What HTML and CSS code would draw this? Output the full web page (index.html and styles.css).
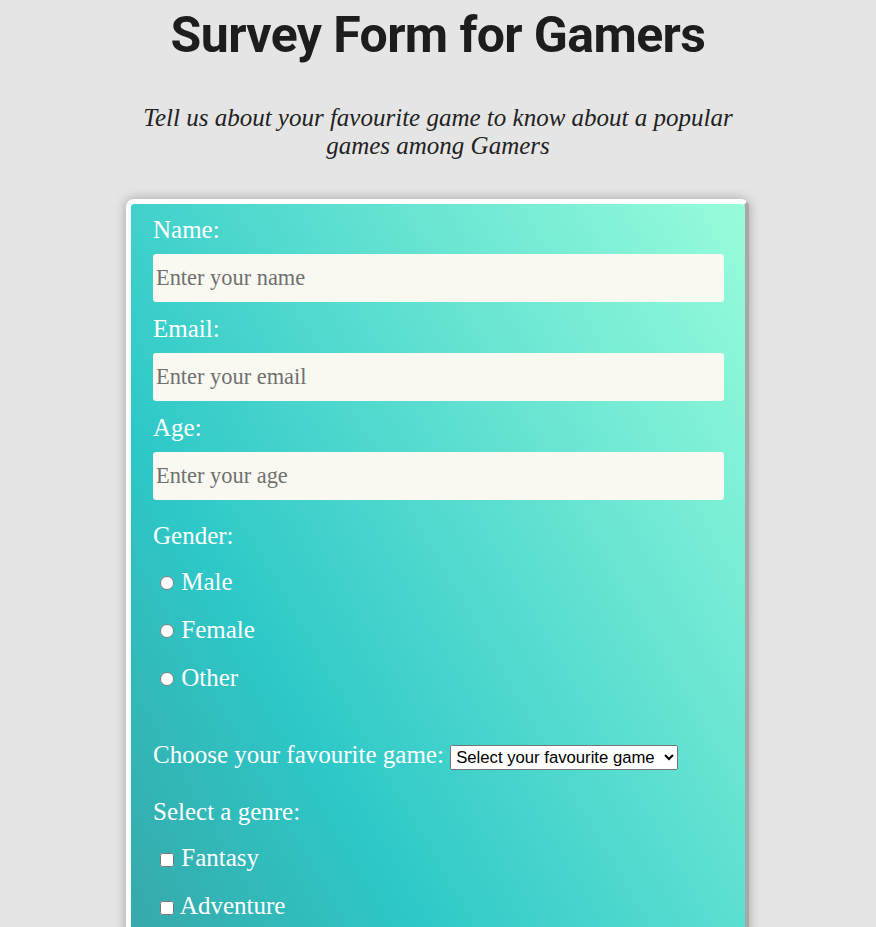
FILE: index.html
```html
<!DOCTYPE html>
<html lang="en">
<head>
<meta charset="utf-8">
<title>Survey Form for Gamers</title>
<link rel="stylesheet" href="styles.css">
</head>
<body>
<header class="page-header">
  <h1 class="title" id="title">Survey Form for Gamers</h1>
  <p class="description" id="description">Tell us about your favourite game to know about a popular games among Gamers</p>
</header>
<form class="survey" id="survey-form">
  <label class="field-label" for="name">Name:</label>
  <input class="text-input" type="text" id="name" placeholder="Enter your name">
  <label class="field-label" for="email">Email:</label>
  <input class="text-input" type="email" id="email" placeholder="Enter your email">
  <label class="field-label" for="age">Age:</label>
  <input class="text-input" type="number" id="age" placeholder="Enter your age">

  <div class="group-label gender-label">Gender:</div>
  <div class="options">
    <label class="option"><input class="radio" type="radio" name="gender" value="male"> Male</label>
    <label class="option"><input class="radio" type="radio" name="gender" value="female"> Female</label>
    <label class="option"><input class="radio" type="radio" name="gender" value="other"> Other</label>
  </div>

  <div class="select-row">
    <label for="game">Choose your favourite game:</label>
    <select class="game-select" id="game">
      <option>Select your favourite game</option>
      <option>Minecraft</option>
      <option>Fortnite</option>
      <option>GTA V</option>
    </select>
  </div>

  <div class="group-label genre-label">Select a genre:</div>
  <div class="options">
    <label class="option"><input class="check" type="checkbox" value="fantasy"> Fantasy</label>
    <label class="option"><input class="check" type="checkbox" value="adventure"> Adventure</label>
    <label class="option"><input class="check" type="checkbox" value="action"> Action</label>
    <label class="option"><input class="check" type="checkbox" value="strategy"> Strategy</label>
  </div>

  <label class="field-label comment-label" for="comments">Any comments?</label>
  <textarea class="comments" id="comments" placeholder="Enter your comments here"></textarea>
  <button class="submit" type="submit">Submit</button>
</form>
</body>
</html>
```
FILE: styles.css
```css
html, body {
  margin: 0;
  padding: 0;
}

body {
  background: #e5e5e5;
  font-family: "Liberation Serif", "Times New Roman", serif;
  padding-bottom: 60px;
}

.page-header {
  text-align: center;
}

.title {
  margin: 5px 0 0;
  font-family: Roboto, "Liberation Sans", sans-serif;
  font-weight: 700;
  font-size: 50px;
  line-height: 60px;
  letter-spacing: -0.6px;
  color: #1d1d1d;
}

.description {
  max-width: 640px;
  margin: 39px auto 39px;
  font-style: italic;
  font-size: 25px;
  line-height: 28px;
  color: #222;
}

.survey {
  box-sizing: border-box;
  width: 623px;
  margin: 0 auto 0 calc(50% - 312px);
  padding: 12px 21px 30px 22px;
  border-top: 5px solid #fff;
  border-left: 5px solid #fff;
  border-right: 4px solid #a8a8a8;
  border-bottom: 4px solid #a8a8a8;
  border-radius: 8px;
  box-shadow: 0 0 12px rgba(0, 0, 0, 0.3);
  background-color: #3f8590;
  background-image: linear-gradient(60deg, #3f8590 0%, #36a9aa 24.5%, #2ec8c8 45.6%, #98fcdb 100%);
  background-size: 100% 1300px;
  background-repeat: no-repeat;
  color: #fff;
  font-size: 25px;
  line-height: 28px;
}

.field-label {
  display: block;
}

.text-input {
  display: block;
  box-sizing: border-box;
  width: 100%;
  height: 48px;
  margin: 10px 0 13px;
  padding: 0 3px;
  border: none;
  border-radius: 3px;
  background: #f9f9f1;
  font-family: "Liberation Serif", "Times New Roman", serif;
  font-size: 22.4px;
  color: #333;
}

.text-input::placeholder {
  color: #707070;
}

.group-label {
  display: block;
}

.gender-label {
  margin-top: 22px;
}

.options {
  margin-top: 8px;
}

.option {
  display: block;
  line-height: 48px;
}

.radio,
.check {
  width: 14px;
  height: 14px;
  margin: 0 1px 0 7px;
}

.check {
  vertical-align: -1px;
}

.select-row {
  margin-top: 39px;
}

.game-select {
  font-family: Arial, "Liberation Sans", sans-serif;
  font-size: 16.7px;
  padding: 1px 6px 1px 1px;
}

.genre-label {
  margin-top: 28px;
}

.comment-label {
  margin-top: 20px;
}

.comments {
  display: block;
  box-sizing: border-box;
  width: 100%;
  height: 120px;
  margin: 10px 0 20px;
  border: none;
  border-radius: 3px;
  background: #f9f9f1;
  font-family: "Liberation Serif", "Times New Roman", serif;
  font-size: 20px;
}

.submit {
  display: block;
  width: 100%;
  height: 48px;
  border: none;
  border-radius: 3px;
  background: #1d1d1d;
  color: #fff;
  font-size: 22px;
}
```
